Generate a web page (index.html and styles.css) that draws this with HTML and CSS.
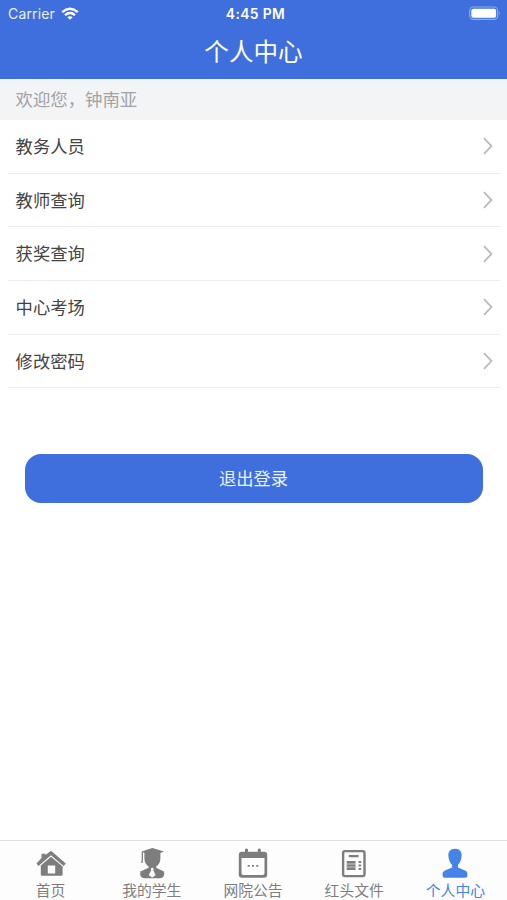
FILE: index.html
```html
<!DOCTYPE html>
<html lang="zh-CN">
<head>
<meta charset="utf-8">
<title>个人中心</title>
<link rel="stylesheet" href="styles.css">
</head>
<body>
<header class="header">
  <div class="status">
    <div class="carrier"><span>Carrier</span>
      <svg width="18" height="14" viewBox="0 0 18 14" fill="none" stroke="#fff" stroke-width="2.4"><path d="M1.2 5.1Q9-1.5 16.8 5.1M4 8.1Q9 4 14 8.1"/><path d="M6.3 10.2Q9 8.2 11.7 10.2L9 12.8Z" fill="#fff" stroke="none"/></svg>
    </div>
    <div class="time">4:45 PM</div>
    <svg class="battery" width="32" height="15" viewBox="0 0 32 15"><rect x=".7" y="1" width="28" height="12.4" rx="3.6" fill="none" stroke="#91abed" stroke-width="1.1"/><rect x="2.3" y="2.7" width="24.8" height="9" rx="2" fill="#fff"/><path d="M30 5.2q1.8 2 0 4Z" fill="#91abed"/></svg>
  </div>
  <h1 class="title">个人中心</h1>
</header>
<div class="welcome">欢迎您，钟南亚</div>
<main class="main">
  <ul class="list">
    <li class="row"><span>教务人员</span><svg class="arrow" viewBox="0 0 10 18"><path d="M1 1.2 8.4 9 1 16.8"/></svg></li>
    <li class="row"><span>教师查询</span><svg class="arrow" viewBox="0 0 10 18"><path d="M1 1.2 8.4 9 1 16.8"/></svg></li>
    <li class="row"><span>获奖查询</span><svg class="arrow" viewBox="0 0 10 18"><path d="M1 1.2 8.4 9 1 16.8"/></svg></li>
    <li class="row"><span>中心考场</span><svg class="arrow" viewBox="0 0 10 18"><path d="M1 1.2 8.4 9 1 16.8"/></svg></li>
    <li class="row"><span>修改密码</span><svg class="arrow" viewBox="0 0 10 18"><path d="M1 1.2 8.4 9 1 16.8"/></svg></li>
  </ul>
  <button class="logout">退出登录</button>
</main>
<nav class="tabs">
  <a class="tab"><svg class="icon" viewBox="0 0 32 32"><path d="M6.5 11V6.8h4V8L16 3.7 30.8 16.6 28.6 19 16 8.2 3.4 19 1.5 16.6Z"/><path fill-rule="evenodd" d="M5.8 18.6 16 9.8l11.6 9.6v8.4q0 1-1 1H6.8q-1 0-1-1ZM12.8 18.6v7.8h7.4v-7.8Z"/></svg><span>首页</span></a>
  <a class="tab"><svg class="icon" viewBox="0 0 32 32"><path d="M16.3 1 28 4.4 24.400 5.900v5.500c0 4-2 6.400-4.200 8.200v1.200L28 24.600q1.400 6.600-4 6.600H8.400q-5.400 0-4-6.600l8.200-3.800v-1.200C10.400 17.800 8.400 15.400 8.400 11.400V5.800L7 5.300v7.300L6.600 16H5.200l.5-3.400V4.600Z"/><path fill="#fff" d="m14.800 21.800 1.400-1.200 1.600 1.200-.5 1.500 2.300 5-3.400 2.300-3.400-2.300 2.400-5Z"/></svg><span>我的学生</span></a>
  <a class="tab"><svg class="icon" viewBox="0 0 32 32"><path fill-rule="evenodd" d="M8 2.2q1.6-1.2 3 0v2.6h9.8V2.2q1.6-1.2 3 0v2.6h3.4q3 0 3 3v20q0 3-3 3H4.8q-3 0-3-3v-20q0-3 3-3H8ZM4.5 11v15.2q0 1.8 1.8 1.8h19.4q1.8 0 1.8-1.8V11Z"/><path d="M10.700 18h2v1.800h-2ZM15 18h2v1.800h-2ZM19.300 18h2v1.800h-2Z"/></svg><span>网院公告</span></a>
  <a class="tab"><svg class="icon" viewBox="0 0 32 32"><rect x="5.1" y="4.1" width="21.400" height="25" rx="1.800" fill="none" stroke="currentColor" stroke-width="2.400"/><path d="M10.800 8h9.800v2.200h-9.800ZM8.700 14h8.800v9H8.700ZM20.600 14h2.500v2h-2.500ZM20.600 17.500h2.500v2h-2.500ZM20.600 21h2.500v2h-2.500Z"/><path d="M8.700 17h8.800M8.700 20h8.800" stroke="#fff" stroke-width=".6"/></svg><span>红头文件</span></a>
  <a class="tab active"><svg class="icon" viewBox="0 0 32 32"><path d="M16 1.800c4.400 0 7 2.800 6.600 7-.2 4-1.500 7-3.700 9.200v2.400l6.700 2.800c2.800 1.200 3.400 3.500 2.600 6-.3 1-1.200 1.600-2.500 1.600H6.300c-1.300 0-2.200-.6-2.500-1.600-.8-2.500-.2-4.800 2.600-6l6.700-2.800V18C10.900 15.800 9.600 12.800 9.400 8.800 9 4.600 11.600 1.800 16 1.800Z"/></svg><span>个人中心</span></a>
</nav>
</body>
</html>
```
FILE: styles.css
```css
* { box-sizing: border-box; }
body {
  margin: 0;
  height: 900px;
  display: flex;
  flex-direction: column;
  overflow: hidden;
  background: #fff;
  color: #444;
  font-family: Inter, "Noto Sans CJK SC", sans-serif;
}
.header { height: 79px; background: #3f6fdc; color: #fff; }
.status {
  display: grid;
  grid-template-columns: 1fr auto 1fr;
  align-items: center;
  height: 27px;
  padding: 0 6px 0 8px;
  font-size: 14px;
}
.carrier { display: flex; align-items: center; gap: 6px; letter-spacing: .15px; color: #e8effd; }
.time { font-size: 13.8px; font-weight: 600; letter-spacing: .4px; padding-left: 2px; }
.battery { justify-self: end; }
.title { margin: 0; height: 50px; line-height: 50px; font-size: 24.6px; font-weight: 400; text-align: center; }
.welcome { height: 41px; line-height: 41px; padding-left: 15.5px; background: #f2f4f6; color: #a3a3a3; font-size: 17.4px; }
.main { flex: 1; }
.list { list-style: none; margin: 0; padding: 0 7px 0 8px; }
.row {
  display: flex;
  align-items: center;
  justify-content: space-between;
  height: 53.7px;
  padding: 0 7px 0 7.6px;
  border-bottom: 1px solid #eee;
  font-size: 17.3px;
}
.row span { padding-bottom: 2px; }
.arrow { width: 10px; height: 18px; fill: none; stroke: #b9b9b9; stroke-width: 1.8; }
.logout {
  display: block;
  width: 458px;
  height: 49px;
  margin: 65.5px 0 0 25px;
  padding: 0 1px 2px 0;
  border: 0;
  border-radius: 16px;
  background: #3f6fdc;
  color: #edf2ff;
  font: inherit;
  font-size: 17.3px;
}
.tabs { display: flex; height: 60px; padding-right: 1px; border-top: 1px solid #e2e2e2; background: #fdfdfd; }
.tab { flex: 1; display: flex; flex-direction: column; align-items: center; padding-top: 6px; color: #7d7d7d; font-size: 14.8px; }
.tab span { line-height: 20px; padding-top: 1.5px; }
.icon { width: 32px; height: 32px; fill: currentColor; flex: none; }
.active { color: #4683e6; }
```
